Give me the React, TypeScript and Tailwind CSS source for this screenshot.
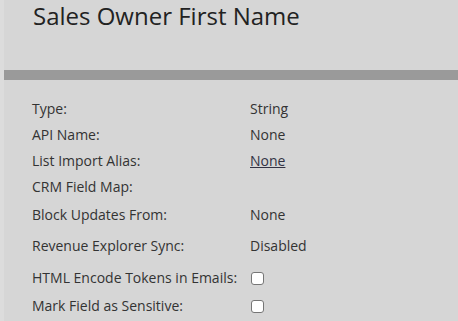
import React from "react";

export default function App() {
  interface Row {
    label: string;
    value?: string;
    link?: boolean;
    check?: boolean;
    h: string;
  }
  const rows: Row[] = [
    { label: "Type:", value: "String", h: "h-[26px]" },
    { label: "API Name:", value: "None", h: "h-[26px]" },
    { label: "List Import Alias:", value: "None", link: true, h: "h-[26px]" },
    { label: "CRM Field Map:", h: "h-[28px]" },
    { label: "Block Updates From:", value: "None", h: "h-[31px]" },
    { label: "Revenue Explorer Sync:", value: "Disabled", h: "h-[32px]" },
    { label: "HTML Encode Tokens in Emails:", check: true, h: "h-[28px]" },
    { label: "Mark Field as Sensitive:", check: true, h: "h-[24px]" },
  ];

  return (
    <div className="flex w-full h-[321px] overflow-hidden bg-[#d6d6d6] text-[#333333]" style={{ fontFamily: '"Open Sans", sans-serif' }}>
      <div className="w-[4px] bg-[#dcdcdc]" />
      <div className="flex-1 flex flex-col">
        <div className="h-[70px]">
          <h1 className="pl-[29px] text-[24px] leading-[32px] text-[#222222]">Sales Owner First Name</h1>
        </div>
        <div className="h-[10px] bg-[#9a9a9a]" />
        <div className="pl-[28px] pt-[19px] text-[14px] leading-[20px]">
          {rows.map((r, i) => (
            <div key={i} className={"flex " + r.h}>
              <div className="w-[218px]">{r.label}</div>
              {r.check ? (
                <div className="w-[13px] h-[13px] mt-[4px] ml-[1px] rounded-[3px] border border-[#767676] bg-white" />
              ) : r.link ? (
                <span className="underline text-[#333344]">{r.value}</span>
              ) : (
                <span>{r.value}</span>
              )}
            </div>
          ))}
        </div>
      </div>
    </div>
  );
}
